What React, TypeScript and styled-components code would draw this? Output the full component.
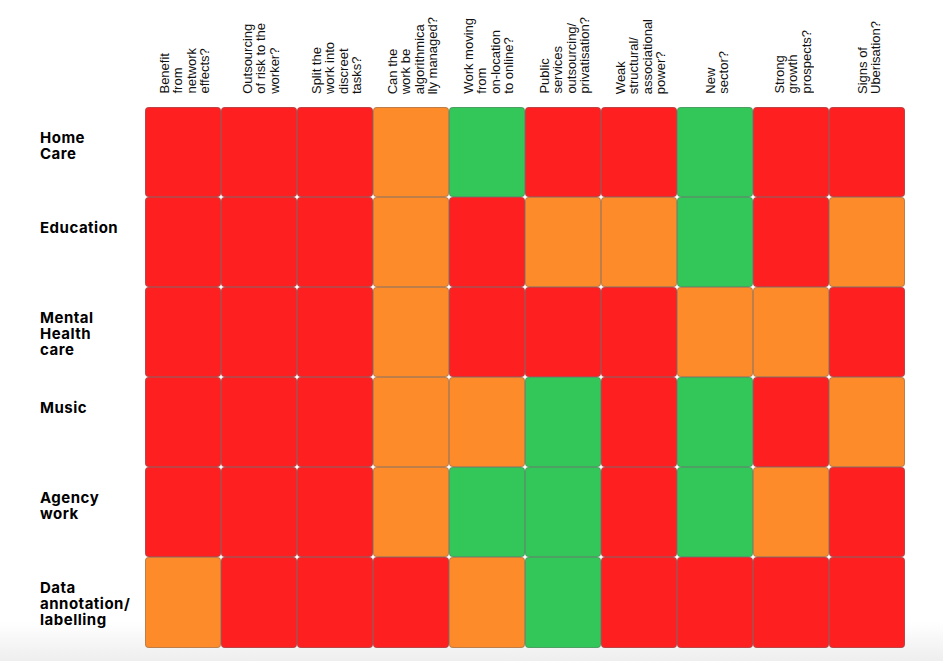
import { Fragment } from 'react';
import styled, { createGlobalStyle } from 'styled-components';

const GlobalStyle = createGlobalStyle`
  html, body {
    margin: 0;
    padding: 0;
    height: 661px;
    overflow: hidden;
  }
  body {
    background: linear-gradient(to bottom, #ffffff 0px, #ffffff 622px, #eeeeee 661px);
    font-family: 'Liberation Sans', Arial, sans-serif;
  }
`;

type Level = 'R' | 'O' | 'G';

const colors: Record<Level, string> = {
  R: '#fe1f21',
  O: '#fd8b2a',
  G: '#33c659',
};

const questions: string[][] = [
  ['Benefit', 'from', 'network', 'effects?'],
  ['Outsourcing', 'of risk to the', 'worker?'],
  ['Split the', 'work into', 'discreet', 'tasks?'],
  ['Can the', 'work be', 'algorithmica', 'lly managed?'],
  ['Work moving', 'from', 'on-location', 'to online?'],
  ['Public', 'services', 'outsourcing/', 'privatisation?'],
  ['Weak', 'structural/', 'associational', 'power?'],
  ['New', 'sector?'],
  ['Strong', 'growth', 'prospects?'],
  ['Signs of', 'Uberisation?'],
];

const sectors: { label: string[]; values: string }[] = [
  { label: ['Home', 'Care'], values: 'RRROGRRGRR' },
  { label: ['Education'], values: 'RRRORROOGRO'.slice(0, 4) + 'ROOGRO' },
  { label: ['Mental', 'Health', 'care'], values: 'RRRORRROOR' },
  { label: ['Music'], values: 'RRROOGRGRO' },
  { label: ['Agency', 'work'], values: 'RRROGGRGOR' },
  { label: ['Data', 'annotation/', 'labelling'], values: 'ORRROGRRRR' },
];

const Matrix = styled.div`
  display: grid;
  grid-template-columns: 145px repeat(10, 76px);
  grid-template-rows: 107px repeat(5, 90px) 91px;
`;

const Corner = styled.div``;

const Question = styled.div`
  display: flex;
  align-items: flex-end;
  justify-content: center;
  padding: 0 0 13px 4px;
`;

const QuestionText = styled.div`
  writing-mode: vertical-rl;
  transform: rotate(180deg);
  font-family: 'Liberation Sans', Arial, sans-serif;
  font-size: 13px;
  line-height: 13.3px;
  color: #111;
  white-space: nowrap;
`;

const SectorLabel = styled.div`
  padding: 23px 0 0 40px;
  font-family: Inter, 'Liberation Sans', sans-serif;
  font-weight: 700;
  font-size: 15px;
  line-height: 16px;
  letter-spacing: 0.5px;
  color: #000;
`;

const Cell = styled.div<{ $level: Level }>`
  background: ${({ $level }) => colors[$level]};
  border: 1px solid rgba(110, 110, 110, 0.45);
  border-radius: 4px;
`;

export default function App() {
  return (
    <>
      <GlobalStyle />
      <Matrix>
        <Corner />
        {questions.map((lines, i) => (
          <Question key={i}>
            <QuestionText>
              {lines.map((l, j) => (
                <div key={j}>{l}</div>
              ))}
            </QuestionText>
          </Question>
        ))}
        {sectors.map((s) => (
          <Fragment key={s.label.join(' ')}>
            <SectorLabel>
              {s.label.map((l, j) => (
                <div key={j}>{l}</div>
              ))}
            </SectorLabel>
            {s.values.split('').map((v, j) => (
              <Cell key={j} $level={v as Level} />
            ))}
          </Fragment>
        ))}
      </Matrix>
    </>
  );
}
